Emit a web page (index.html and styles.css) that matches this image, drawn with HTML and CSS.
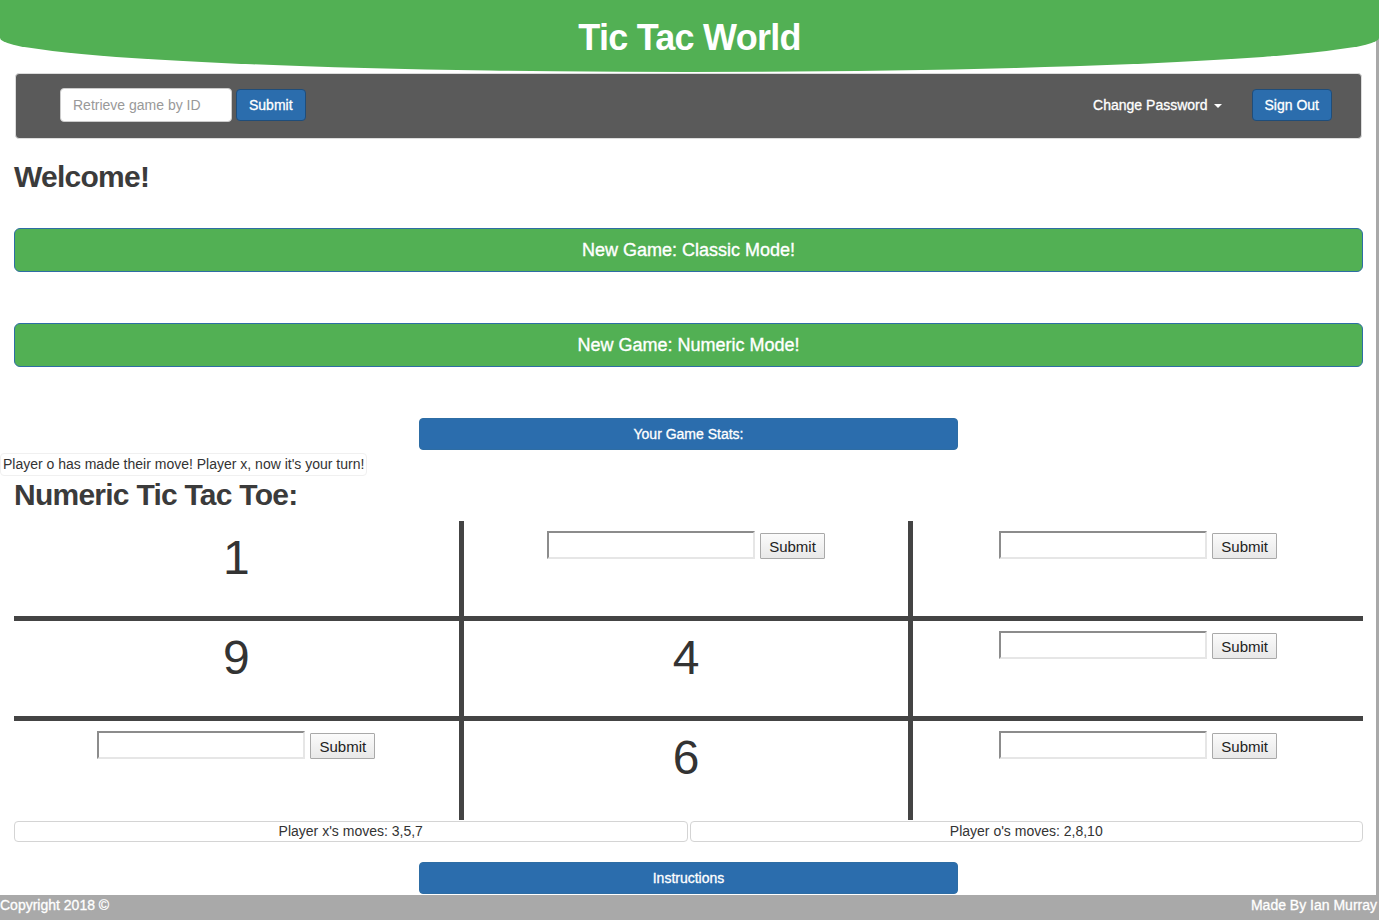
FILE: index.html
```html
<!DOCTYPE html>
<html lang="en">
<head>
<meta charset="utf-8">
<title>Tic Tac World</title>
<link rel="stylesheet" href="styles.css">
</head>
<body>
<header class="site-header">
  <h1 class="site-title">Tic Tac World</h1>
</header>
<main class="page">
  <nav class="navbar">
    <form class="nav-form">
      <input class="nav-input" type="text" placeholder="Retrieve game by ID">
      <button class="btn-primary" type="button">Submit</button>
    </form>
    <div class="nav-right">
      <span class="nav-dropdown">Change Password<span class="caret"></span></span>
      <button class="btn-primary" type="button">Sign Out</button>
    </div>
  </nav>

  <h2 class="heading welcome">Welcome!</h2>

  <button class="btn-game" type="button">New Game: Classic Mode!</button>
  <button class="btn-game" type="button">New Game: Numeric Mode!</button>

  <button class="btn-wide" type="button">Your Game Stats:</button>

  <div class="message">Player o has made their move! Player x, now it's your turn!</div>

  <h2 class="heading board-title">Numeric Tic Tac Toe:</h2>

  <div class="board">
    <div class="cell cell-r cell-b"><span class="num">1</span></div>
    <div class="cell cell-r cell-b"><div class="entry"><input class="cell-input" type="text"><button class="cell-btn" type="button">Submit</button></div></div>
    <div class="cell cell-b"><div class="entry"><input class="cell-input" type="text"><button class="cell-btn" type="button">Submit</button></div></div>

    <div class="cell cell-r cell-b"><span class="num">9</span></div>
    <div class="cell cell-r cell-b"><span class="num">4</span></div>
    <div class="cell cell-b"><div class="entry"><input class="cell-input" type="text"><button class="cell-btn" type="button">Submit</button></div></div>

    <div class="cell cell-r"><div class="entry"><input class="cell-input" type="text"><button class="cell-btn" type="button">Submit</button></div></div>
    <div class="cell cell-r"><span class="num">6</span></div>
    <div class="cell"><div class="entry"><input class="cell-input" type="text"><button class="cell-btn" type="button">Submit</button></div></div>
  </div>

  <div class="moves">
    <div class="moves-box">Player x's moves: 3,5,7</div>
    <div class="moves-box">Player o's moves: 2,8,10</div>
  </div>

  <button class="btn-wide instructions" type="button">Instructions</button>
</main>
<footer class="site-footer">
  <span>Copyright 2018 ©</span>
  <span>Made By Ian Murray</span>
</footer>
</body>
</html>
```
FILE: styles.css
```css
* {
  box-sizing: border-box;
}

html, body {
  margin: 0;
  padding: 0;
}

body {
  font-family: "Liberation Sans", Arial, Helvetica, sans-serif;
  color: #333;
  font-size: 14px;
  background: linear-gradient(to left, #a9a9a9 3px, #ffffff 3px);
}

button, input {
  font-family: "Liberation Sans", Arial, Helvetica, sans-serif;
}

/* ---------- header ---------- */
.site-header {
  height: 72px;
  background: #52b054;
  border-radius: 0 0 50% 50% / 0 0 34px 34px;
  padding-top: 18px;
  text-align: center;
}

.site-title {
  margin: 0;
  color: #fff;
  font-size: 36px;
  font-weight: bold;
  line-height: 40px;
  letter-spacing: -0.75px;
}

/* ---------- page ---------- */
.page {
  padding: 0 16px 0 14px;
}

.navbar {
  margin: 1px 1px 0;
  height: 66px;
  border: 1px solid #dcdcdc;
  border-radius: 4px;
  background: #5a5a5a;
  display: flex;
  align-items: center;
  justify-content: space-between;
  padding: 0 29px 2px 44px;
}

.nav-form {
  display: flex;
  align-items: center;
  gap: 4px;
  margin: 0;
}

.nav-input {
  width: 172px;
  height: 34px;
  border: 1px solid #ccc;
  border-radius: 4px;
  padding: 6px 12px;
  font-size: 14px;
  color: #555;
  background: #fff;
}

.nav-input::placeholder {
  color: #999;
}

.btn-primary {
  height: 32px;
  padding: 0 12px;
  background: #2b6dad;
  color: #fff;
  border: 1px solid #1f4d7a;
  border-radius: 4px;
  font-size: 14px;
  -webkit-text-stroke: 0.3px #fff;
}

.nav-right {
  display: flex;
  align-items: center;
  gap: 30px;
}

.nav-dropdown {
  color: #fff;
  font-size: 14px;
  display: flex;
  align-items: center;
  -webkit-text-stroke: 0.3px #fff;
}

.caret {
  display: inline-block;
  width: 0;
  height: 0;
  margin-left: 6px;
  margin-top: 2px;
  border-top: 4px solid #fff;
  border-left: 4px solid transparent;
  border-right: 4px solid transparent;
}

.heading {
  font-size: 30px;
  font-weight: bold;
  line-height: 33px;
  letter-spacing: -0.75px;
  color: #3b3b3b;
}

.welcome {
  margin: 21px 0 35px;
}

.btn-game {
  display: block;
  width: 100%;
  height: 44px;
  margin: 0 0 51px;
  background: #52b054;
  border: 1px solid #2e6da4;
  border-radius: 6px;
  color: #fff;
  font-size: 18px;
  -webkit-text-stroke: 0.35px #fff;
}

.btn-wide {
  display: block;
  width: 539px;
  height: 32px;
  margin: 0 auto;
  background: #2b6dad;
  border: 1px solid #2e6da4;
  border-radius: 4px;
  color: #fff;
  font-size: 14px;
  -webkit-text-stroke: 0.3px #fff;
}

.message {
  width: fit-content;
  height: 23px;
  margin: 3px 0 0 -14px;
  padding: 0 2px 0 2px;
  border: 1px solid #f0f0f0;
  border-radius: 4px;
  background: #fff;
  font-size: 14px;
  line-height: 21px;
  color: #333;
}

.board-title {
  margin: 2px 0 10px;
}

/* ---------- board ---------- */
.board {
  display: grid;
  grid-template-columns: 1fr 1fr 1fr;
  grid-template-rows: 100px 100px 99px;
}

.cell {
  border: 0 solid #444;
  text-align: center;
}

.cell-r {
  border-right-width: 5px;
}

.cell-b {
  border-bottom-width: 5px;
}

.num {
  display: block;
  padding-top: 11px;
  font-size: 48px;
  line-height: 1.1;
  color: #333;
}

.entry {
  display: flex;
  justify-content: center;
  align-items: flex-end;
  gap: 5px;
  padding-top: 10px;
}

.cell-input {
  width: 208px;
  height: 28px;
  border: 2px solid;
  border-color: #8c8c8c #e6e6e6 #e6e6e6 #8c8c8c;
  background: #fff;
  padding: 0 3px;
  font-size: 14px;
}

.cell-btn {
  height: 26px;
  padding: 0 8px;
  background: linear-gradient(#fbfbfb, #e8e8e8);
  border: 1px solid #a9a9a9;
  border-radius: 1px;
  font-size: 15px;
  color: #222;
}

.moves {
  display: flex;
  gap: 2px;
  margin-top: 1px;
}

.moves-box {
  flex: 1;
  height: 21px;
  border: 1px solid #d4d4d4;
  border-radius: 4px;
  text-align: center;
  font-size: 14px;
  line-height: 19px;
  color: #333;
}

.instructions {
  margin-top: 20px;
}

/* ---------- footer ---------- */
.site-footer {
  margin-top: 1px;
  height: 25px;
  background: #a9a9a9;
  color: #fff;
  display: flex;
  justify-content: space-between;
  padding: 0 2px 0 0;
  font-size: 14px;
  line-height: 21px;
  -webkit-text-stroke: 0.3px #fff;
}
```
